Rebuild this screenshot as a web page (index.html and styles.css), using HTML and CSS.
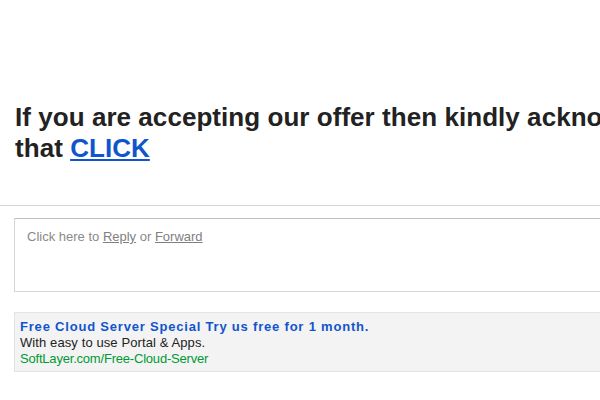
FILE: index.html
```html
<!DOCTYPE html>
<html>
<head>
<meta charset="utf-8">
<link rel="stylesheet" href="styles.css">
</head>
<body>
<div class="page">
  <div class="message">
    <h1 class="offer">If you are accepting our offer then kindly acknowledge that <a href="#" class="click">CLICK</a></h1>
  </div>
  <div class="reply-area">
    <div class="reply-box">Click here to <a href="#" class="rl">Reply</a> or <a href="#" class="rl">Forward</a></div>
  </div>
  <div class="ad">
    <div class="ad-title">Free Cloud Server Special Try us free for 1 month.</div>
    <div class="ad-text">With easy to use Portal &amp; Apps.</div>
    <div class="ad-url">SoftLayer.com/Free-Cloud-Server</div>
  </div>
</div>
</body>
</html>
```
FILE: styles.css
```css
html, body {
  margin: 0;
  padding: 0;
  background: #fff;
  overflow: hidden;
}
.page {
  width: 760px;
  font-family: "Liberation Sans", Arial, sans-serif;
}
.message {
  padding: 102px 0 0 15px;
  height: 103px;
  border-bottom: 1px solid #d8d8d8;
}
.offer {
  margin: 0;
  width: 700px;
  font-size: 26px;
  line-height: 31px;
  font-weight: bold;
  color: #222;
  letter-spacing: 0.05px;
}
.click {
  color: #1155cc;
  text-decoration: underline;
}
.reply-area {
  padding: 12px 0 0 14px;
}
.reply-box {
  height: 56px;
  border: 1px solid #d6d6d6;
  border-top-color: #c0c0c0;
  padding: 9px 12px 7px 12px;
  font-size: 13px;
  line-height: 17px;
  color: #8a8a8a;
}
.rl {
  color: #808080;
  text-decoration: underline;
}
.ad {
  margin: 20px 0 0 14px;
  background: #f3f3f3;
  border: 1px solid #e3e3e3;
  padding: 6px 6px 4px 5px;
  font-size: 13px;
  line-height: 16px;
}
.ad-title {
  color: #1155cc;
  font-weight: bold;
  font-size: 13px;
  letter-spacing: 0.8px;
}
.ad-text {
  color: #222;
  letter-spacing: 0.1px;
}
.ad-url {
  color: #009933;
  letter-spacing: -0.2px;
}
```
